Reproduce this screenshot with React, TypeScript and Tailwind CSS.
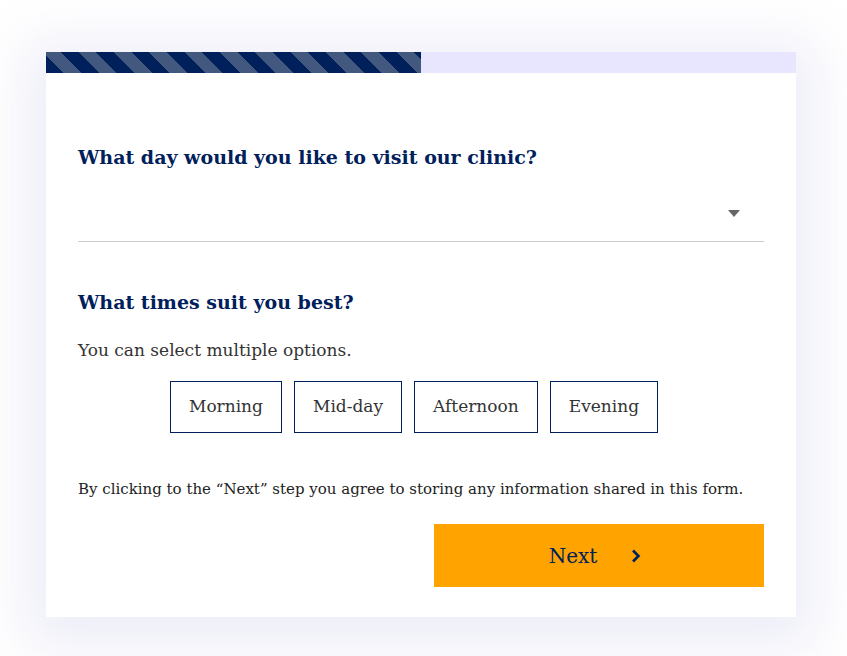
import React from "react";

const serif = { fontFamily: '"DejaVu Serif", "Liberation Serif", serif' };

export default function App() {
  const options = ["Morning", "Mid-day", "Afternoon", "Evening"];
  return (
    <div className="w-[847px] h-[656px] bg-white pt-[52px] pl-[46px]" style={serif}>
      <div className="w-[750px] h-[565px] bg-white shadow-[0_10px_50px_20px_rgba(215,215,240,0.45)] flex flex-col">
        <div className="h-[21px] bg-[#e8e5ff] flex">
          <div className="w-[375px] h-full bg-[repeating-linear-gradient(45deg,#00205b_0px,#00205b_12.5px,#42587f_12.5px,#42587f_25px)]" />
        </div>
        <div className="px-8 pt-[72px] flex flex-col">
          <h2 className="text-[19px] leading-[24px] font-bold text-[#00205b]">What day would you like to visit our clinic?</h2>
          <div className="h-[73px] border-b border-[#cccccc] flex items-center justify-end pr-[24px] pt-[16px]">
            <svg width="12" height="7" viewBox="0 0 12 7"><path d="M0 0h12L6 7z" fill="#666" /></svg>
          </div>
          <h2 className="mt-[48px] text-[19px] leading-[24px] font-bold text-[#00205b]">What times suit you best?</h2>
          <p className="mt-[24px] text-[17px] leading-[24px] text-[#333]">You can select multiple options.</p>
          <div className="mt-[19px] flex justify-center gap-[12px] pr-[14px]">
            {options.map((o) => (
              <button key={o} className="h-[52px] px-[18px] border border-[#00205b] text-[17px] text-[#333] bg-white">{o}</button>
            ))}
          </div>
          <p className="mt-[44px] text-[15px] leading-[24px] text-[#222]">By clicking to the “Next” step you agree to storing any information shared in this form.</p>
          <div className="mt-[23px] flex justify-end">
            <button className="w-[330px] h-[63px] bg-[#ffa300] flex items-center justify-center gap-[34px] pr-[8px] text-[20px] text-[#00205b]">
              <span>Next</span>
              <svg width="10" height="14" viewBox="0 0 10 14"><path d="M2 1.5l5.5 5.5L2 12.5" stroke="#00205b" strokeWidth="2.6" fill="none" /></svg>
            </button>
          </div>
        </div>
      </div>
    </div>
  );
}
